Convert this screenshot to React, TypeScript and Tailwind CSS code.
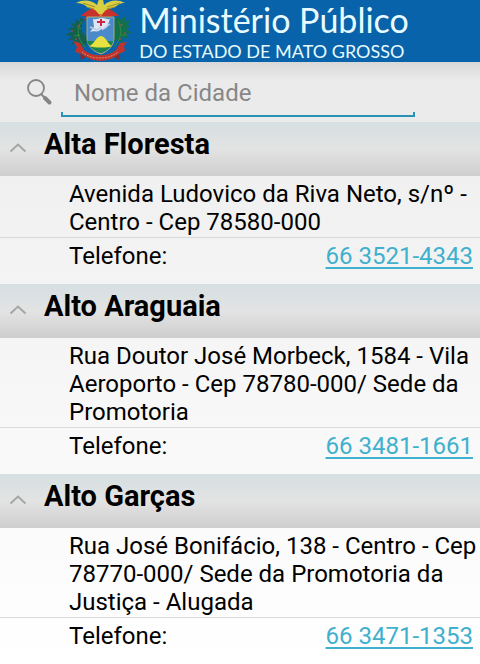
import React from 'react';

type Office = { city: string; address: string; phone: string };

const offices: Office[] = [
  { city: 'Alta Floresta', address: 'Avenida Ludovico da Riva Neto, s/nº - Centro - Cep 78580-000', phone: '66 3521-4343' },
  { city: 'Alto Araguaia', address: 'Rua Doutor José Morbeck, 1584 - Vila Aeroporto - Cep 78780-000/ Sede da Promotoria', phone: '66 3481-1661' },
  { city: 'Alto Garças', address: 'Rua José Bonifácio, 138 - Centro - Cep 78770-000/ Sede da Promotoria da Justiça - Alugada', phone: '66 3471-1353' },
];

function Crest() {
  return (
    <svg className="h-[62px] w-[72px] shrink-0" viewBox="0 0 72 62" fill="none" aria-hidden="true">
      {/* coffee and rubber branches */}
      <g fill="#14604f">
        <path d="M21 19l-4-1 0 4-5-3 1 5-6-1 4 4-7 2 6 2-8 4 7 1-5 5 7-2-2 6 6-3 4 5 4-3 2-5-6-7 0-8z" />
        <path d="M52 19l5-3 0 4 7-4-3 6 7-2-4 5 4 1-5 3 6 4-7 1 4 5-7-2 1 6-6-4-4 5-4-6 5-7z" fill="#14704a" />
      </g>
      <path d="M19 21c-6 7-5 18 3 26M55 21c5 8 3 19-4 26M14 26l4 3M60 24l-4 4M11 36l6-1M64 35l-6 0" stroke="#2f8a3e" />
      <g fill="#8f4a50">
        <circle cx="9" cy="31" r="1" /><circle cx="15" cy="26" r="1" /><circle cx="13" cy="39" r="1" />
        <circle cx="58" cy="25" r="1" /><circle cx="62" cy="33" r="1" /><circle cx="57" cy="39" r="1" />
      </g>
      {/* red plume */}
      <path d="M37 7c-8 1-15 4-19 9l5 0-2 4 6-3 4 2 4-2 5 2 4-2 7 3-2-4 7 0c-4-5-11-8-19-9z" fill="#c8322c" />
      <path d="M35 5h4l2 7-3 5-4-5z" fill="#dc7a25" />
      {/* golden wings */}
      <path d="M13 3c7-4 16-3 21 2l2-6h4l1 6c5-5 14-6 21-2-5 0-7 2-10 4-4 2-6 1-9 3l-4 4h-3l-4-4c-3-2-5-1-8-3-3-3-6-4-11-4z" fill="#d9cf42" />
      <path d="M20 3l12 4M57 3L44 7M24 7l7 2M52 7l-8 2" stroke="#a08f2c" />
      {/* shield */}
      <path d="M24 17h27v21c0 7-5 13-13 16-9-3-14-9-14-16z" fill="#4a8acb" stroke="#a9ac74" />
      <path d="M24 41h26c-1 6-6 10-12 12-7-2-12-6-14-12z" fill="#1f8350" />
      <path d="M26 46c5-1 7-10 12-10s7 9 11 10c-5 2-17 2-23 0z" fill="#e8e13f" />
      <path d="M30 19c4 1 5-1 9-1s5 2 8 1l-3 8c-2 3-5 1-7 3-3 3-6 0-10 2l4-5z" fill="#dfe6f3" />
      <path d="M27 27l7 3 4-3M39 30l8-6" stroke="#b7cbe6" strokeWidth="1.500" />
      <path d="M37 19h2v2h3v2h-3v3h-2v-3h-3v-2h3z" fill="#cd2744" />
      {/* motto ribbon */}
      <path d="M10 41l7 2 4 7c8 7 24 7 32 0l4-7 7-1-3 4 1 5-6 3c-10 9-27 9-37 0l-7-2 2-5z" fill="#c3332d" />
      <path d="M19 52c9 8 27 8 36 0" stroke="#d98b5f" strokeDasharray="2 1" />
      <path d="M17 54l1 6 5-3zM57 54l-1 6-5-3z" fill="#842d31" />
    </svg>
  );
}

function OfficeSection({ city, address, phone }: Office) {
  return (
    <section>
      <h2>
        <button
          type="button"
          aria-expanded="true"
          className="flex h-[54px] w-full items-start bg-linear-to-b from-[#d5dfe2] via-[#e3e3e3] to-[#cecece] pt-1 pl-2 text-left"
        >
          <svg className="mt-3 h-5 w-5 shrink-0" viewBox="0 0 20 20" fill="none" aria-hidden="true">
            <path d="M2.500 13.500L10 6.500l7.500 7" stroke="#a5a5a5" strokeWidth="2" />
          </svg>
          <span className="ml-4 text-[29px] leading-9 font-bold">{city}</span>
        </button>
      </h2>
      <p className="border-b border-[#d9dadb] pt-1 pb-px pl-[69px] text-2xl leading-7">{address}</p>
      <div className="flex h-[46px] items-start justify-between pt-1 pr-[7px] pl-[69px] text-2xl leading-7">
        <span>Telefone:</span>
        <a href={`tel:${phone.replace(/\D/g, '')}`} className="text-[#3fb0cd] underline decoration-2 underline-offset-3">{phone}</a>
      </div>
    </section>
  );
}

export default function App() {
  return (
    <div className="min-h-screen bg-linear-to-b from-[#ebebeb] to-white font-['Roboto',sans-serif] text-black">
      <header className="flex h-[62px] justify-center bg-[#0863aa] pr-2">
        <Crest />
        <h1 className="ml-1 font-['Lato',sans-serif] text-[#e8fbff]">
          <span className="block text-[34px] leading-10 whitespace-nowrap">Ministério Público</span>
          <span className="block text-[18px] leading-[22px] whitespace-nowrap">DO ESTADO DE MATO GROSSO</span>
        </h1>
      </header>
      <main>
        <form role="search" className="flex h-[60px] items-start bg-linear-to-b from-[#d8d8d8] via-[#ebebeb] via-30% to-[#ebebeb] pr-[65px] pl-[26px]" onSubmit={(e) => e.preventDefault()}>
          <label htmlFor="city" aria-label="Nome da Cidade" className="mt-4 w-[35px] shrink-0">
            <svg className="h-7 w-7" viewBox="0 0 28 28" fill="none" aria-hidden="true">
              <circle cx="10" cy="10" r="8" stroke="#858585" strokeWidth="1.800" />
              <path d="M15 16l4 4" stroke="#858585" strokeWidth="2" />
              <path d="M19 20l4.500 4.500" stroke="#858585" strokeWidth="4" strokeLinecap="round" />
            </svg>
          </label>
          <div className="relative min-w-0 flex-1">
            <input
              id="city"
              type="text"
              aria-label="Nome da Cidade"
              placeholder="Nome da Cidade"
              className="h-[55px] w-full border-b-2 border-[#2993b3] bg-transparent px-[13px] pt-2 text-2xl outline-none placeholder:text-[#878787]"
            />
            <span className="pointer-events-none absolute bottom-0 left-0 h-[5px] w-full border-x-2 border-[#2993b3]" />
          </div>
        </form>
        {offices.map((office) => (
          <OfficeSection key={office.city} {...office} />
        ))}
      </main>
    </div>
  );
}
